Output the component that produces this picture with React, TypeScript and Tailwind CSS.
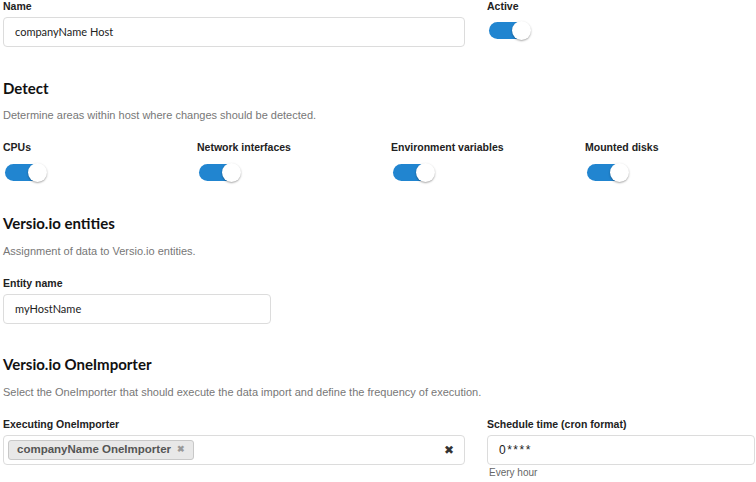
import React from "react";

const Toggle = () => (
  <div className="relative w-[41px] h-[17px] rounded-full bg-[#2185d0] ml-[2px]">
    <div className="absolute right-[-1px] top-[-1px] w-[19px] h-[19px] rounded-full bg-white shadow-[0_1px_2px_rgba(0,0,0,0.35)]" />
  </div>
);

const Label = ({ children }: { children: React.ReactNode }) => (
  <div className="text-[10.5px] leading-[12px] font-bold text-[#222] font-['Liberation_Sans',Arial,sans-serif]">
    {children}
  </div>
);

const Heading = ({ children, className = "" }: { children: React.ReactNode; className?: string }) => (
  <div className={"text-[15px] leading-[18px] font-bold text-[#111] font-['Lato',sans-serif] " + className}>
    {children}
  </div>
);

const Desc = ({ children, className = "" }: { children: React.ReactNode; className?: string }) => (
  <div className={"text-[11px] leading-[14px] text-[#777] font-['Liberation_Sans',Arial,sans-serif] " + className}>
    {children}
  </div>
);

export default function App() {
  return (
    <div className="w-[756px] h-[482px] bg-white pl-[3px] overflow-hidden font-['Liberation_Sans',Arial,sans-serif]">
      <div className="flex gap-[22px]">
        <div className="w-[462px] shrink-0">
          <Label>Name</Label>
          <div className="mt-[5px] h-[30px] border border-[#dcdcdc] rounded-[4px] flex items-center pl-[11px] text-[11px] text-[#222] font-['Lato',sans-serif]">
            companyName Host
          </div>
        </div>
        <div className="w-[268px] shrink-0">
          <Label>Active</Label>
          <div className="mt-[10px]">
            <Toggle />
          </div>
        </div>
      </div>

      <Heading className="mt-[32px]">Detect</Heading>
      <Desc className="mt-[11px]">Determine areas within host where changes should be detected.</Desc>
      <div className="flex mt-[19px]">
        {["CPUs", "Network interfaces", "Environment variables", "Mounted disks"].map((t) => (
          <div key={t} className="w-[194px] shrink-0">
            <Label>{t}</Label>
            <div className="mt-[11px]">
              <Toggle />
            </div>
          </div>
        ))}
      </div>

      <Heading className="mt-[33px]">Versio.io entities</Heading>
      <Desc className="mt-[12px]">Assignment of data to Versio.io entities.</Desc>
      <div className="mt-[19px] w-[268px]">
        <Label>Entity name</Label>
        <div className="mt-[5px] h-[30px] border border-[#dcdcdc] rounded-[4px] flex items-center pl-[11px] text-[11px] text-[#222] font-['Lato',sans-serif]">
          myHostName
        </div>
      </div>

      <Heading className="mt-[31px]">Versio.io OneImporter</Heading>
      <Desc className="mt-[12px]">
        Select the OneImporter that should execute the data import and define the frequency of execution.
      </Desc>
      <div className="flex gap-[22px] mt-[19px]">
        <div className="w-[462px] shrink-0">
          <Label>Executing OneImporter</Label>
          <div className="mt-[5px] h-[30px] border border-[#dcdcdc] rounded-[4px] flex items-center pl-[4px] pr-[10px]">
            <div className="h-[20px] flex items-center gap-[6px] px-[8px] bg-[#e8e8e8] border border-[#c8c8c8] rounded-[3px] text-[11.5px] font-bold text-[#555]">
              <span>companyName OneImporter</span>
              <span className="text-[9px] text-[#999]">✖</span>
            </div>
            <div className="flex-1" />
            <span className="text-[12px] text-[#333]">✖</span>
          </div>
        </div>
        <div className="w-[268px] shrink-0">
          <Label>Schedule time (cron format)</Label>
          <div className="mt-[5px] h-[30px] border border-[#dcdcdc] rounded-[4px] flex items-center pl-[11px] text-[12px] text-[#222] tracking-[1.5px]">
            0****
          </div>
          <div className="mt-[2px] ml-[2px] text-[10px] leading-[12px] text-[#666]">Every hour</div>
        </div>
      </div>
    </div>
  );
}
